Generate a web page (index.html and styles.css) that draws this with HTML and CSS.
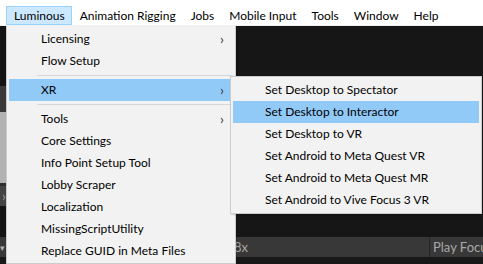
FILE: index.html
```html
<!DOCTYPE html>
<html>
<head>
<meta charset="utf-8">
<link rel="stylesheet" href="styles.css">
</head>
<body>
<div class="app">
  <nav class="menubar">
    <span class="mb-item active">Luminous</span>
    <span class="mb-item">Animation Rigging</span>
    <span class="mb-item">Jobs</span>
    <span class="mb-item">Mobile Input</span>
    <span class="mb-item">Tools</span>
    <span class="mb-item">Window</span>
    <span class="mb-item">Help</span>
  </nav>
  <div class="workspace">
    <div class="upper">
      <div class="strip">
        <div class="s-dark s1"></div>
        <div class="s-mid s2"></div>
        <div class="s-light s3"></div>
        <div class="s-edge s4"></div>
        <div class="s-tab s5">›</div>
        <div class="s-dark s6"></div>
      </div>
    </div>
    <div class="toolbar">
      <span class="tb-caret">▾</span>
      <span class="tb-zoom">8x</span>
      <span class="tb-play">Play Focused</span>
    </div>
    <div class="lower"></div>

    <div class="menu main-menu">
      <div class="mi has-sub">Licensing<span class="arrow">›</span></div>
      <div class="mi">Flow Setup</div>
      <div class="sep"></div>
      <div class="mi has-sub hl">XR<span class="arrow">›</span></div>
      <div class="sep"></div>
      <div class="mi has-sub">Tools<span class="arrow">›</span></div>
      <div class="mi">Core Settings</div>
      <div class="mi">Info Point Setup Tool</div>
      <div class="mi">Lobby Scraper</div>
      <div class="mi">Localization</div>
      <div class="mi">MissingScriptUtility</div>
      <div class="mi">Replace GUID in Meta Files</div>
    </div>

    <div class="menu sub-menu">
      <div class="mi">Set Desktop to Spectator</div>
      <div class="mi hl">Set Desktop to Interactor</div>
      <div class="mi">Set Desktop to VR</div>
      <div class="mi">Set Android to Meta Quest VR</div>
      <div class="mi">Set Android to Meta Quest MR</div>
      <div class="mi">Set Android to Vive Focus 3 VR</div>
    </div>
  </div>
</div>
</body>
</html>
```

FILE: styles.css
```css
html, body {
  margin: 0;
  padding: 0;
}
body {
  width: 483px;
  height: 264px;
  overflow: hidden;
  background: #161616;
  font-family: "Lato", "Noto Sans", "Liberation Sans", sans-serif;
  font-size: 12px;
  color: #000;
}
.app {
  width: 483px;
  height: 264px;
  overflow: hidden;
  display: flex;
  flex-direction: column;
}
.menubar {
  height: 25px;
  background: #fff;
  border-bottom: 1px solid #f0f0f0;
  display: flex;
  align-items: flex-start;
  padding-left: 6px;
  box-sizing: content-box;
}
.mb-item {
  margin-top: 6px;
  height: 17px;
  line-height: 17px;
  padding: 0 6px 0 7px;
  border: 1px solid transparent;
  white-space: nowrap;
}
.mb-item.active {
  background: #cce8ff;
  border-color: #99d1ff;
}
.workspace {
  position: relative;
  flex: 1;
  display: flex;
  flex-direction: column;
  overflow: hidden;
}
.upper {
  height: 211px;
  display: flex;
}
.strip {
  width: 6px;
  display: flex;
  flex-direction: column;
}
.s1 { height: 60px; }
.s-dark { background: #141414; }
.s2 { height: 26px; background: #3a3a3a; }
.s3 { height: 71px; background: #b2b2b2; }
.s4 { height: 3px; background: #2e2e2e; }
.s5 {
  height: 20px;
  background: #454545;
  color: #9a9a9a;
  font-size: 14px;
  line-height: 20px;
  text-align: right;
}
.s6 { flex: 1; background: #141414; }
.toolbar {
  height: 20px;
  background: #383838;
  display: flex;
  align-items: center;
  color: #a8a8a8;
  font-size: 13px;
  overflow: hidden;
}
.tb-caret {
  width: 6px;
  font-size: 9px;
  text-align: right;
  color: #b0b0b0;
}
.tb-zoom {
  margin-left: 229px;
  width: 195px;
  flex: none;
}
.tb-play {
  flex: none;
  border-left: 1px solid #262626;
  padding-left: 3px;
  height: 20px;
  line-height: 20px;
  white-space: nowrap;
}
.lower {
  flex: 1;
  background: #181818;
}
.menu {
  position: absolute;
  background: #f2f2f2;
  border: 1px solid #cccccc;
  padding: 2px;
  box-shadow: 1px 1px 2px rgba(0,0,0,0.15);
}
.main-menu {
  left: 6px;
  top: -1px;
  width: 224px;
  height: 233px;
}
.sub-menu {
  left: 230px;
  top: 50px;
  width: 246px;
}
.mi {
  height: 22px;
  line-height: 22px;
  padding-left: 32px;
  position: relative;
  white-space: nowrap;
}
.mi.hl {
  background: #91c9f7;
}
.arrow {
  position: absolute;
  right: 9px;
  top: 0;
  color: #333;
  font-size: 14px;
}
.sep {
  height: 1px;
  background: #d7d7d7;
  margin: 3px 0 3px 28px;
}
.main-menu .sep:nth-of-type(2) {
  margin: 2px 0 3px 28px;
}
```
